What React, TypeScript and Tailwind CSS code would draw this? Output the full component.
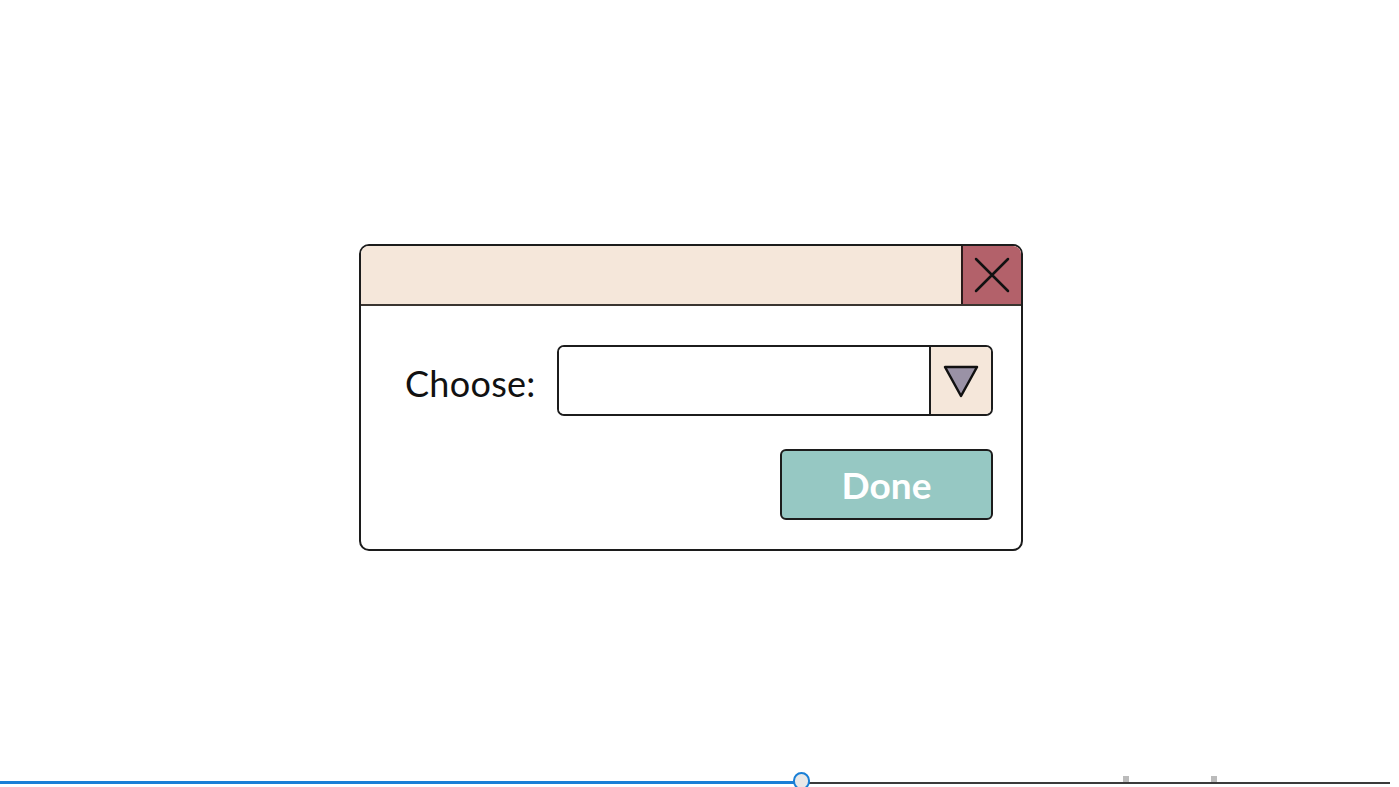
import React from 'react';

function CloseIcon() {
  return (
    <svg width="38" height="38" viewBox="0 0 38 38" fill="none">
      <path d="M3 3L35 35M35 3L3 35" stroke="#111" strokeWidth="2.5" strokeLinecap="round" />
    </svg>
  );
}

function Triangle() {
  return (
    <svg width="38" height="35" viewBox="0 0 38 35" fill="none">
      <path d="M3 3H35L19 32Z" fill="#9a92a6" stroke="#111" strokeWidth="2.5" strokeLinejoin="round" />
    </svg>
  );
}

function Dialog() {
  return (
    <div className="w-[664px] h-[307px] rounded-[10px] border-2 border-[#1c1c1c] bg-white overflow-hidden flex flex-col">
      <div className="h-[60px] flex bg-[#f5e7da] border-b-2 border-[#3a3530]">
        <div className="flex-1" />
        <button className="w-[60px] h-full bg-[#b3616a] border-l-2 border-[#2a1a1a] flex items-center justify-center">
          <CloseIcon />
        </button>
      </div>
      <div className="flex-1 flex flex-col pl-[44px] pr-[28px] pt-[39px]">
        <div className="flex items-center">
          <span className="text-[36px] text-[#111] tracking-[0.3px] leading-none w-[152px] pt-[4px]" style={{ fontFamily: 'Lato, "Noto Sans", sans-serif' }}>
            Choose:
          </span>
          <div className="flex w-[436px] h-[71px] rounded-[7px] border-2 border-[#1c1c1c] overflow-hidden">
            <div className="flex-1 bg-white" />
            <div className="w-[62px] bg-[#f5e7da] border-l-2 border-[#1c1c1c] flex items-center justify-center pt-[2px]">
              <Triangle />
            </div>
          </div>
        </div>
        <div className="flex justify-end mt-[33px]">
          <button
            className="w-[213px] h-[71px] rounded-[6px] border-2 border-[#1c1c1c] bg-[#96c8c3] text-white text-[37px] font-bold flex items-center justify-center"
            style={{ fontFamily: 'Lato, "Noto Sans", sans-serif' }}
          >
            Done
          </button>
        </div>
      </div>
    </div>
  );
}

function Slider() {
  return (
    <div className="relative h-[6px] w-full">
      <div className="absolute left-0 top-[1px] h-[3px] w-[801px] bg-[#1a7fd6]" />
      <div className="absolute left-[801px] top-[2px] h-[2px] w-[589px] bg-[#3a3a3a]" />
      <div className="absolute left-[1123px] top-[-4px] h-[6px] w-[6px] bg-[#bbbbbb]" />
      <div className="absolute left-[1211px] top-[-4px] h-[6px] w-[6px] bg-[#bbbbbb]" />
      <div className="absolute left-[793px] top-[-8px] h-[18px] w-[17px] rounded-full bg-[#e8e8e8] border-2 border-[#1a7fd6]" />
    </div>
  );
}

export default function App() {
  return (
    <div className="w-[1399px] h-[787px] bg-white flex flex-col overflow-hidden">
      <div className="flex-1 pt-[244px] pl-[359px]">
        <Dialog />
      </div>
      <div className="h-[7px]">
        <Slider />
      </div>
    </div>
  );
}
